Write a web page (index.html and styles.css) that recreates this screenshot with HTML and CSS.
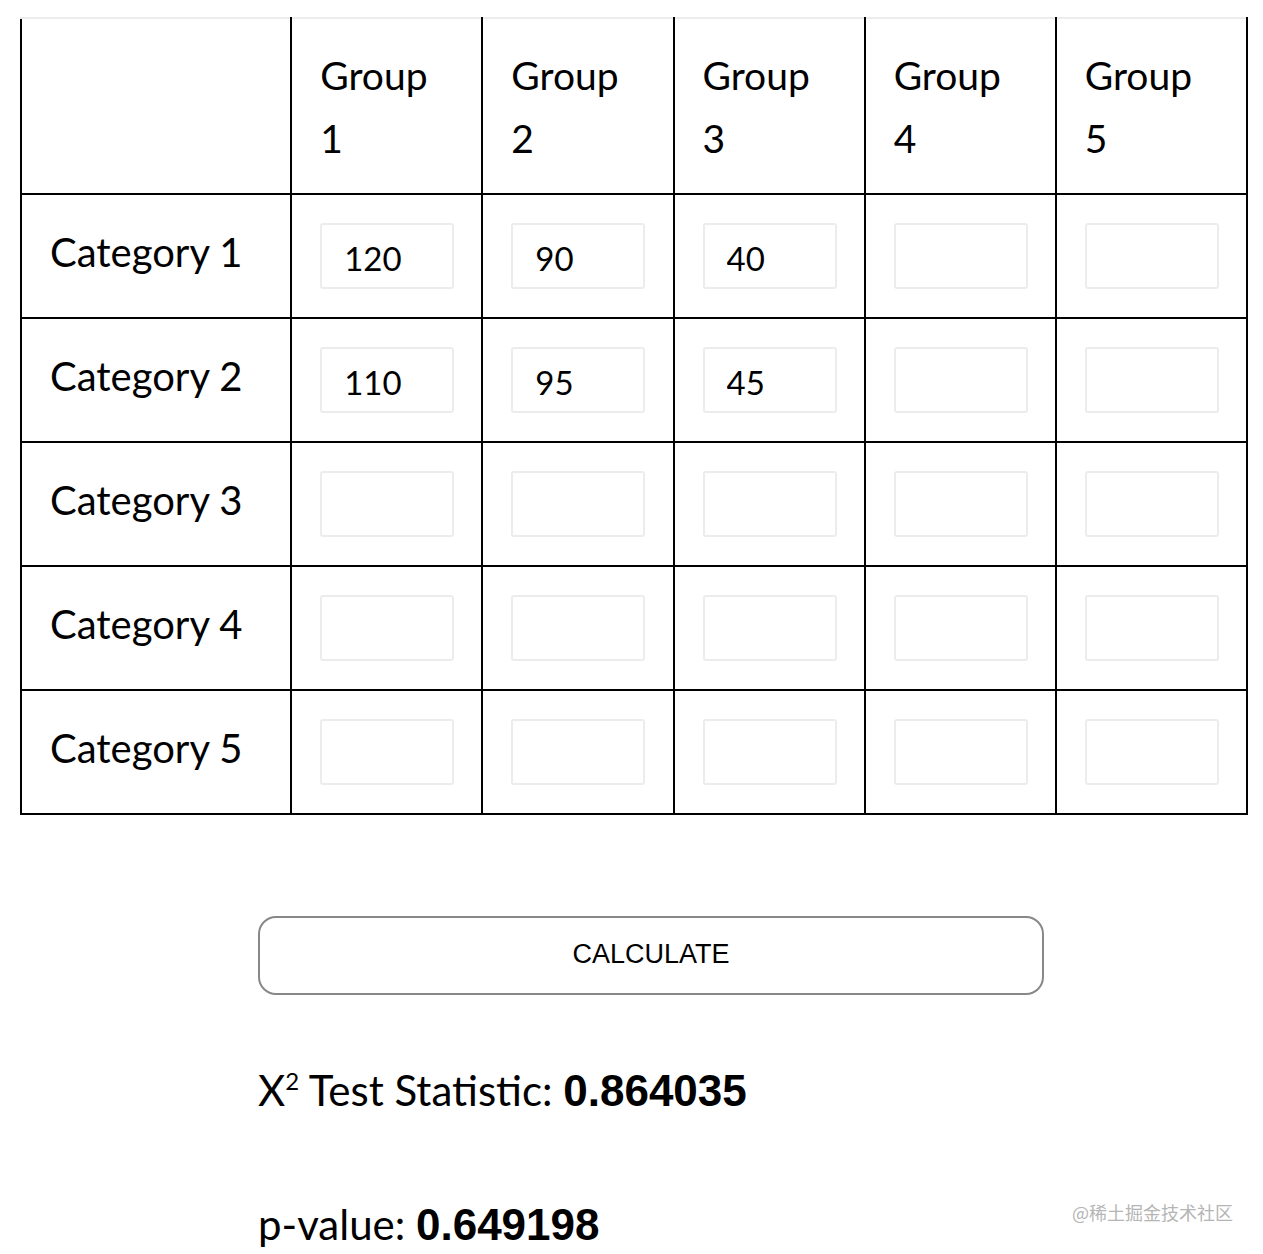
FILE: index.html
```html
<!DOCTYPE html>
<html>
<head>
<meta charset="utf-8">
<link rel="stylesheet" href="styles.css">
</head>
<body>
<div class="page">
  <table class="grid">
    <colgroup>
      <col class="c-label"><col class="c-g"><col class="c-g"><col class="c-g"><col class="c-g"><col class="c-g">
    </colgroup>
    <thead>
      <tr class="head">
        <th></th>
        <th><span class="gh">Group 1</span></th>
        <th><span class="gh">Group 2</span></th>
        <th><span class="gh">Group 3</span></th>
        <th><span class="gh">Group 4</span></th>
        <th><span class="gh">Group 5</span></th>
      </tr>
    </thead>
    <tbody>
      <tr>
        <td class="cat">Category 1</td>
        <td><input class="cell" type="text" value="120"></td>
        <td><input class="cell" type="text" value="90"></td>
        <td><input class="cell" type="text" value="40"></td>
        <td><input class="cell" type="text" value=""></td>
        <td><input class="cell" type="text" value=""></td>
      </tr>
      <tr>
        <td class="cat">Category 2</td>
        <td><input class="cell" type="text" value="110"></td>
        <td><input class="cell" type="text" value="95"></td>
        <td><input class="cell" type="text" value="45"></td>
        <td><input class="cell" type="text" value=""></td>
        <td><input class="cell" type="text" value=""></td>
      </tr>
      <tr>
        <td class="cat">Category 3</td>
        <td><input class="cell" type="text"></td>
        <td><input class="cell" type="text"></td>
        <td><input class="cell" type="text"></td>
        <td><input class="cell" type="text"></td>
        <td><input class="cell" type="text"></td>
      </tr>
      <tr>
        <td class="cat">Category 4</td>
        <td><input class="cell" type="text"></td>
        <td><input class="cell" type="text"></td>
        <td><input class="cell" type="text"></td>
        <td><input class="cell" type="text"></td>
        <td><input class="cell" type="text"></td>
      </tr>
      <tr class="last">
        <td class="cat">Category 5</td>
        <td><input class="cell" type="text"></td>
        <td><input class="cell" type="text"></td>
        <td><input class="cell" type="text"></td>
        <td><input class="cell" type="text"></td>
        <td><input class="cell" type="text"></td>
      </tr>
    </tbody>
  </table>

  <div class="controls">
    <button class="calc" type="button">CALCULATE</button>
    <p class="result first">X<sup>2</sup> Test Statistic: <b>0.864035</b></p>
    <p class="result">p-value: <b>0.649198</b></p>
  </div>
</div>
<div class="watermark">@稀土掘金技术社区</div>
</body>
</html>
```

FILE: styles.css
```css
html, body {
  margin: 0;
  padding: 0;
  background: #fff;
  color: #000;
  font-family: Lato, "Noto Sans", sans-serif;
}
.page {
  padding: 17px 0 0 20px;
}
.grid {
  border-collapse: collapse;
  table-layout: fixed;
  width: 1228px;
  border: 2px solid #000;
  border-top-color: #ececec;
}
.c-label { width: 270px; }
.c-g { width: 191px; }
.grid th, .grid td {
  border: 2px solid #000;
  padding: 0 0 0 28px;
  text-align: left;
  vertical-align: middle;
}
.grid thead th {
  border-top-color: #ececec;
  height: 174px;
  font-weight: 400;
  font-size: 39px;
  line-height: 63px;
}
.gh {
  display: block;
  width: min-content;
  padding-top: 2px;
}
.grid tbody td {
  height: 122px;
}
.grid td.cat {
  height: 114px;
  font-size: 40px;
  font-weight: 400;
  padding-left: 28px;
  padding-bottom: 8px;
}
.cell {
  box-sizing: border-box;
  display: block;
  width: 134px;
  height: 66px;
  margin-top: 0;
  border: 2px solid #ececec;
  border-radius: 3px;
  padding: 4px 0 0 22px;
  font-family: Lato, "Noto Sans", sans-serif;
  font-size: 33px;
  color: #000;
  background: #fff;
  outline: none;
}
.controls {
  margin-left: 238px;
  width: 786px;
  padding-top: 101px;
}
.calc {
  box-sizing: border-box;
  display: block;
  width: 786px;
  height: 79px;
  border: 2px solid #888;
  border-radius: 18px;
  background: #fff;
  font-family: "Liberation Sans", Arial, sans-serif;
  font-size: 27px;
  color: #000;
  padding: 0 0 2px 0;
}
.result {
  margin: 0;
  font-size: 42px;
  font-weight: 400;
  line-height: 50px;
  white-space: nowrap;
}
.result.first {
  margin-top: 70px;
}
.result + .result {
  margin-top: 83px;
}
.result sup {
  font-size: 24px;
  line-height: 0;
  vertical-align: 0;
  position: relative;
  top: -16px;
}
.result b {
  font-family: "Liberation Sans", Arial, sans-serif;
  font-weight: 700;
  font-size: 44px;
}
.watermark {
  position: absolute;
  left: 1072px;
  top: 1199px;
  font-family: "Noto Sans CJK SC", sans-serif;
  font-size: 18px;
  line-height: 26px;
  color: #b5b5b5;
  white-space: nowrap;
}
```
